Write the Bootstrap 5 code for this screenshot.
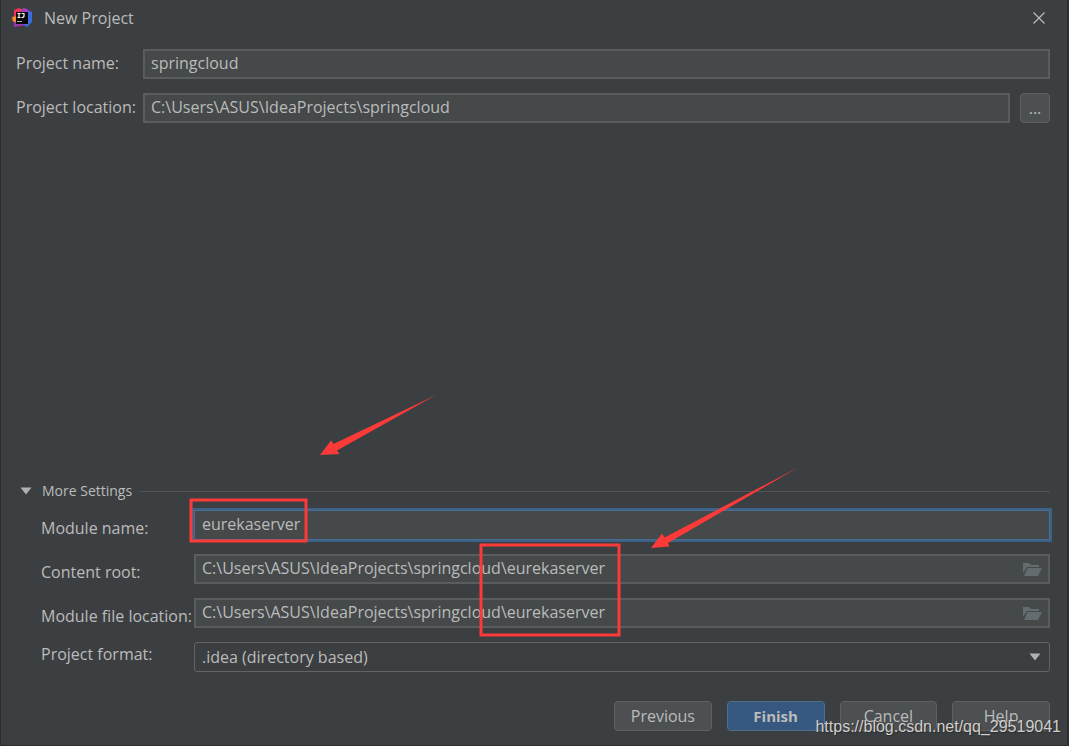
<!DOCTYPE html>
<html lang="en" data-bs-theme="dark">
<head>
<meta charset="utf-8">
<meta name="viewport" content="width=device-width, initial-scale=1">
<title>New Project</title>
<link href="https://cdn.jsdelivr.net/npm/bootstrap@5.3.0/dist/css/bootstrap.min.css" rel="stylesheet">
<style>
  body {
    background: #3c3f41;
    color: #bbbbbb;
    font-family: "Open Sans", "Noto Sans", sans-serif;
    font-size: 16px;
    line-height: 20px;
  }
  .dialog { border: solid #2b2d2e; border-width: 0 2px 1px 1px; }
  .title-bar { height: 36px; padding: 0 16px 0 11px; gap: 11px; }
  .close-btn { width: 24px; height: 24px; color: #bbbbbb; }
  .basics { padding: 13px 17px 0 15px; gap: 14px; }
  .form-row { display: flex; align-items: center; height: 30px; }
  .label-basic { width: 127px; flex: none; white-space: nowrap; padding-bottom: 2px; }
  .label-module { width: 153px; flex: none; white-space: nowrap; }
  .label-low { padding-top: 6px; }
  .label-high { padding-bottom: 6px; }
  .field, .field:focus {
    height: 30px;
    padding: 0 6px 2px;
    border: 2px solid #5a5d5e;
    border-radius: 0;
    background: #45494a;
    color: #bbbbbb;
    font-size: 16px;
    line-height: 20px;
    box-shadow: none;
  }
  .field-active, .field-active:focus { border: 1px solid #466d94; padding: 0 7px 2px; box-shadow: 0 0 0 2px #3d6185; }
  .field-select, .field-select:focus { background: #3c3f41; border: 1px solid #646464; border-radius: 3px; padding: 0 7px; }
  .tool-btn {
    height: 30px;
    padding: 0;
    border: 1px solid #5e6060;
    border-radius: 4px;
    background: #4c5052;
    color: #bbbbbb;
    font-size: 16px;
    line-height: 20px;
  }
  .tool-btn.finish { background: #365880; border-color: #4c708c; font-size: 15px; font-weight: 700; }
  .browse { width: 30px; margin-left: 10px; flex: none; }
  .settings-head { height: 20px; padding: 0 17px 0 19px; }
  .settings-head button { color: #bbbbbb; gap: 10px; font-size: 14px; }
  .rule { height: 1px; margin-left: 8px; background: #515354; }
  .settings-rows { padding: 9px 17px 0 40px; gap: 14px; }
  .end-icon { right: 8px; width: 20px; height: 16px; }
  .arrow-icon { right: 9px; width: 12px; height: 8px; }
  .annotations { overflow: visible; pointer-events: none; width: 1px; height: 1px; z-index: 3; }
  .actions { padding: 29px 17px 14px 0; }
  .actions-inner { width: 436px; gap: 15px; }
  .watermark {
    right: 6px; bottom: 8px;
    font-family: "Liberation Sans", Arial, sans-serif;
    font-size: 16px;
    color: #cfcfcf;
    text-shadow: 1px 1px 1px #2b2b2b;
    pointer-events: none;
  }
</style>
</head>
<body>
<main class="dialog d-flex flex-column min-vh-100 position-relative">
  <header class="title-bar d-flex align-items-center">
    <svg width="21" height="20" viewBox="0 0 21 20" aria-hidden="true">
      <path d="M2 2 7 0l5 2 1 8-9 5-4-2 2-4Z" fill="#f5315b"/>
      <path d="M13 1 20 4v10l-5 5-6-3V3Z" fill="#3a6be0"/>
      <path d="M11 0 15 1l3 3-8 1Z" fill="#a23fc4"/>
      <path d="M0 9 5 8v7l-4-2Z" fill="#f68b2a"/>
      <path d="M2 14h4l8 3-6 1-6 1Z" fill="#9a35b0"/>
      <path d="M4 4h12v12H4z" fill="#080808"/>
      <path d="M5.500 5.500h3M7 5.500v4M5.500 9.500h3M9.500 5.500h3M12 5.500v2.500q0 1.500-2.500 1.500" fill="none" stroke="#fff" stroke-width="1.200"/>
      <path d="M5 13.500h5" stroke="#aaa"/>
    </svg>
    <span class="flex-grow-1">New Project</span>
    <button type="button" class="btn close-btn p-0 border-0 d-flex align-items-center justify-content-center" aria-label="Close">
      <svg width="12" height="12" viewBox="0 0 12 12" aria-hidden="true"><path d="m.5.500 11 11m0-11-11 11" stroke="currentColor" stroke-width="1.200"/></svg>
    </button>
  </header>

  <section class="basics d-flex flex-column">
    <div class="form-row">
      <label class="label-basic" for="projectName">Project name:</label>
      <input class="form-control field" id="projectName" type="text" value="springcloud">
    </div>
    <div class="form-row">
      <label class="label-basic" for="projectLocation">Project location:</label>
      <input class="form-control field" id="projectLocation" type="text" value="C:\Users\ASUS\IdeaProjects\springcloud">
      <button type="button" class="btn tool-btn browse" aria-label="Browse">...</button>
    </div>
  </section>

  <section class="mt-auto position-relative">
    <div class="settings-head d-flex align-items-center">
      <button type="button" class="btn btn-link p-0 border-0 text-decoration-none d-flex align-items-center lh-1" aria-expanded="true">
        <svg width="12" height="8" viewBox="0 0 12 8" aria-hidden="true"><path d="M.5.500h11L6 7.500Z" fill="#afb1b3"/></svg>
        More Settings
      </button>
      <div class="rule flex-grow-1"></div>
    </div>
    <div class="settings-rows d-flex flex-column">
      <div class="form-row">
        <label class="label-module label-low" for="moduleName">Module name:</label>
        <input class="form-control field field-active" id="moduleName" type="text" value="eurekaserver">
      </div>
      <div class="form-row">
        <label class="label-module label-low" for="contentRoot">Content root:</label>
        <div class="flex-grow-1 position-relative d-flex align-items-center">
          <input class="form-control field" id="contentRoot" type="text" value="C:\Users\ASUS\IdeaProjects\springcloud\eurekaserver">
          <button type="button" class="btn end-icon p-0 border-0 position-absolute d-flex" aria-label="Browse content root">
            <svg width="20" height="16" viewBox="0 0 20 16" aria-hidden="true"><path d="M1 2h6l2 2h8v2H5L1 12Z M5.500 7H20l-4 8H2Z" fill="#656c70"/></svg>
          </button>
        </div>
      </div>
      <div class="form-row">
        <label class="label-module label-low" for="moduleFile">Module file location:</label>
        <div class="flex-grow-1 position-relative d-flex align-items-center">
          <input class="form-control field" id="moduleFile" type="text" value="C:\Users\ASUS\IdeaProjects\springcloud\eurekaserver">
          <button type="button" class="btn end-icon p-0 border-0 position-absolute d-flex" aria-label="Browse module file location">
            <svg width="20" height="16" viewBox="0 0 20 16" aria-hidden="true"><path d="M1 2h6l2 2h8v2H5L1 12Z M5.500 7H20l-4 8H2Z" fill="#656c70"/></svg>
          </button>
        </div>
      </div>
      <div class="form-row">
        <label class="label-module label-high" for="projectFormat">Project format:</label>
        <div class="flex-grow-1 position-relative d-flex align-items-center">
          <select class="form-select field field-select" id="projectFormat">
            <option>.idea (directory based)</option>
          </select>
          <svg class="arrow-icon position-absolute pe-none" viewBox="0 0 12 8" aria-hidden="true"><path d="M.5.500h11L6 7.500Z" fill="#afb1b3"/></svg>
        </div>
      </div>
    </div>
    <!-- Red highlight boxes and arrows over the module fields -->
    <svg class="annotations position-absolute top-0 start-0" aria-hidden="true">
      <g fill="none" stroke="#fc3a38" stroke-width="3">
        <rect x="190" y="19" width="115" height="41"/>
        <rect x="480" y="64" width="138" height="90"/>
      </g>
      <g fill="#fc3a38">
        <path d="M319-26 330-40.500 332.500-37 435-86 336-30.500 338.500-27Z"/>
        <path d="M650 67 661 52.500 663.500 56.500 797-13.500 667 62 668.500 65.500Z"/>
      </g>
    </svg>
  </section>

  <footer class="actions d-flex justify-content-end">
    <div class="actions-inner d-flex">
      <button type="button" class="btn tool-btn col">Previous</button>
      <button type="button" class="btn tool-btn finish col">Finish</button>
      <button type="button" class="btn tool-btn col">Cancel</button>
      <button type="button" class="btn tool-btn col">Help</button>
    </div>
  </footer>
  <div class="watermark position-absolute">https://blog.csdn.net/qq_29519041</div>
</main>
<script src="https://cdn.jsdelivr.net/npm/bootstrap@5.3.0/dist/js/bootstrap.bundle.min.js"></script>
</body>
</html>
